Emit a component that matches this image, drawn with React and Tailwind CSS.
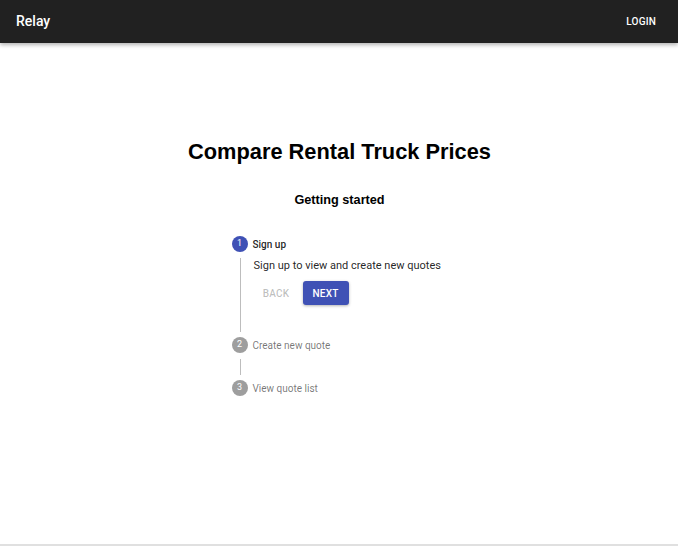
import React from "react";

const steps = [
  { n: 1, label: "Sign up" },
  { n: 2, label: "Create new quote" },
  { n: 3, label: "View quote list" },
];

const StepIcon = ({ n, active }) => (
  <div
    className={`flex items-center justify-center w-4 h-4 rounded-full text-[9px] text-white ${
      active ? "bg-[#3f51b5]" : "bg-[#9e9e9e]"
    }`}
  >
    {n}
  </div>
);

const App = () => {
  return (
    <div className="flex flex-col h-[546px] bg-white font-['Roboto',sans-serif]">
      {/* Barre du haut */}
      <header className="relative z-10 flex items-center justify-between h-[43px] px-4 bg-[#212121] text-white shadow-[0_2px_4px_rgba(0,0,0,0.3)]">
        <span className="text-[14px] font-medium">Relay</span>
        <button className="text-[10px] font-medium tracking-[0.2px] pr-[6px]">LOGIN</button>
      </header>

      <main className="flex-1 flex flex-col items-center pt-[95px] pl-[1px]">
        <h1 className="text-[21.8px] leading-[28px] font-bold text-black font-['Liberation_Sans',Arial,sans-serif]">
          Compare Rental Truck Prices
        </h1>
        <h2 className="mt-[26px] text-[12.7px] leading-[16px] font-bold text-black font-['Liberation_Sans',Arial,sans-serif]">
          Getting started
        </h2>

        {/* Stepper vertical */}
        <div className="w-[216px] mt-[28px]">
          <div className="flex items-center gap-[5px] h-4">
            <StepIcon n={1} active />
            <span className="text-[10px] font-medium text-[rgba(0,0,0,0.87)]">{steps[0].label}</span>
          </div>
          <div className="ml-[8px] mt-[6px] h-[74px] border-l border-[#bdbdbd] pl-[13px]">
            <p className="pt-[1px] text-[11px] leading-[14px] text-[rgba(0,0,0,0.87)]">
              Sign up to view and create new quotes
            </p>
            <div className="flex items-center mt-[8px]">
              <button className="h-6 w-[45px] text-[10px] font-medium text-[rgba(0,0,0,0.26)] tracking-[0.2px]">
                BACK
              </button>
              <button className="ml-[4px] h-6 w-[46px] rounded-[3px] bg-[#3f51b5] text-[10px] font-medium text-white tracking-[0.2px] shadow-[0_1px_3px_rgba(0,0,0,0.3)]">
                NEXT
              </button>
            </div>
          </div>
          <div className="flex items-center gap-[5px] h-4 mt-[5px]">
            <StepIcon n={2} />
            <span className="text-[10px] text-[rgba(0,0,0,0.54)]">{steps[1].label}</span>
          </div>
          <div className="ml-[8px] mt-[6px] h-4 border-l border-[#bdbdbd]" />
          <div className="flex items-center gap-[5px] h-4 mt-[5px]">
            <StepIcon n={3} />
            <span className="text-[10px] text-[rgba(0,0,0,0.54)]">{steps[2].label}</span>
          </div>
        </div>
      </main>

      <div className="h-[2px] bg-[#e0e0e0]" />
    </div>
  );
};

export default App;
